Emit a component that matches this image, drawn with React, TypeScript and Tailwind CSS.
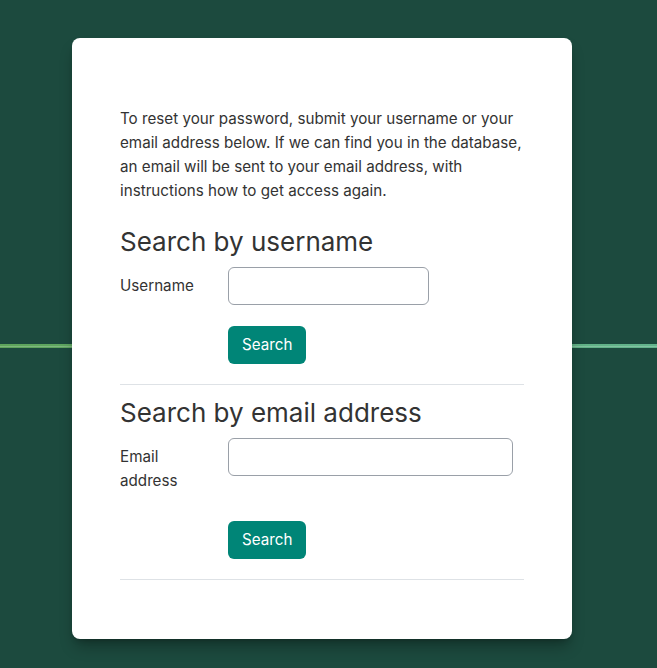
export default function App() {
  return (
    <div
      className="relative min-h-[668px] w-full overflow-hidden bg-[#1c4a3e] text-[#333333]"
      style={{ fontFamily: 'Inter, "Noto Sans", sans-serif' }}
    >
      {/* decorative strip behind the card */}
      <div className="absolute left-0 right-0 top-[344px] h-[4px] bg-gradient-to-r from-[#5ea45b] to-[#62b38c]">
        <div className="mt-[1.5px] h-px bg-white/20" />
      </div>

      <div className="relative flex pt-[38px] pl-[72px]">
        <div className="w-[500px] rounded-lg bg-white px-12 pt-[69px] pb-[59px] shadow-lg shadow-black/30">
          <p className="text-[15.2px] leading-6">
            To reset your password, submit your username or your email address below. If we can find you in the
            database, an email will be sent to your email address, with instructions how to get access again.
          </p>

          <h3 className="mt-[23px] mb-2.5 text-[26px] leading-[31px]">Search by username</h3>
          <div className="flex">
            <label className="w-[108px] py-[7px] text-[15.2px] leading-6">Username</label>
            <input className="h-[38px] w-[201px] rounded-md border border-[#9aa0a8] px-3 outline-none" />
          </div>
          <div className="mt-[21px] pl-[108px]">
            <button className="h-[38px] rounded-md bg-[#008577] px-3.5 text-[15.2px] text-white">Search</button>
          </div>
          <hr className="mt-5 border-[#dee2e6]" />

          <h3 className="mt-[12px] mb-2.5 text-[26px] leading-[31px]">Search by email address</h3>
          <div className="flex">
            <label className="w-[108px] py-[7px] pr-8 text-[15.2px] leading-6">Email address</label>
            <input className="h-[38px] w-[285px] rounded-md border border-[#9aa0a8] px-3 outline-none" />
          </div>
          <div className="mt-[21px] pl-[108px]">
            <button className="h-[38px] rounded-md bg-[#008577] px-3.5 text-[15.2px] text-white">Search</button>
          </div>
          <hr className="mt-5 border-[#dee2e6]" />
        </div>
      </div>
    </div>
  )
}
